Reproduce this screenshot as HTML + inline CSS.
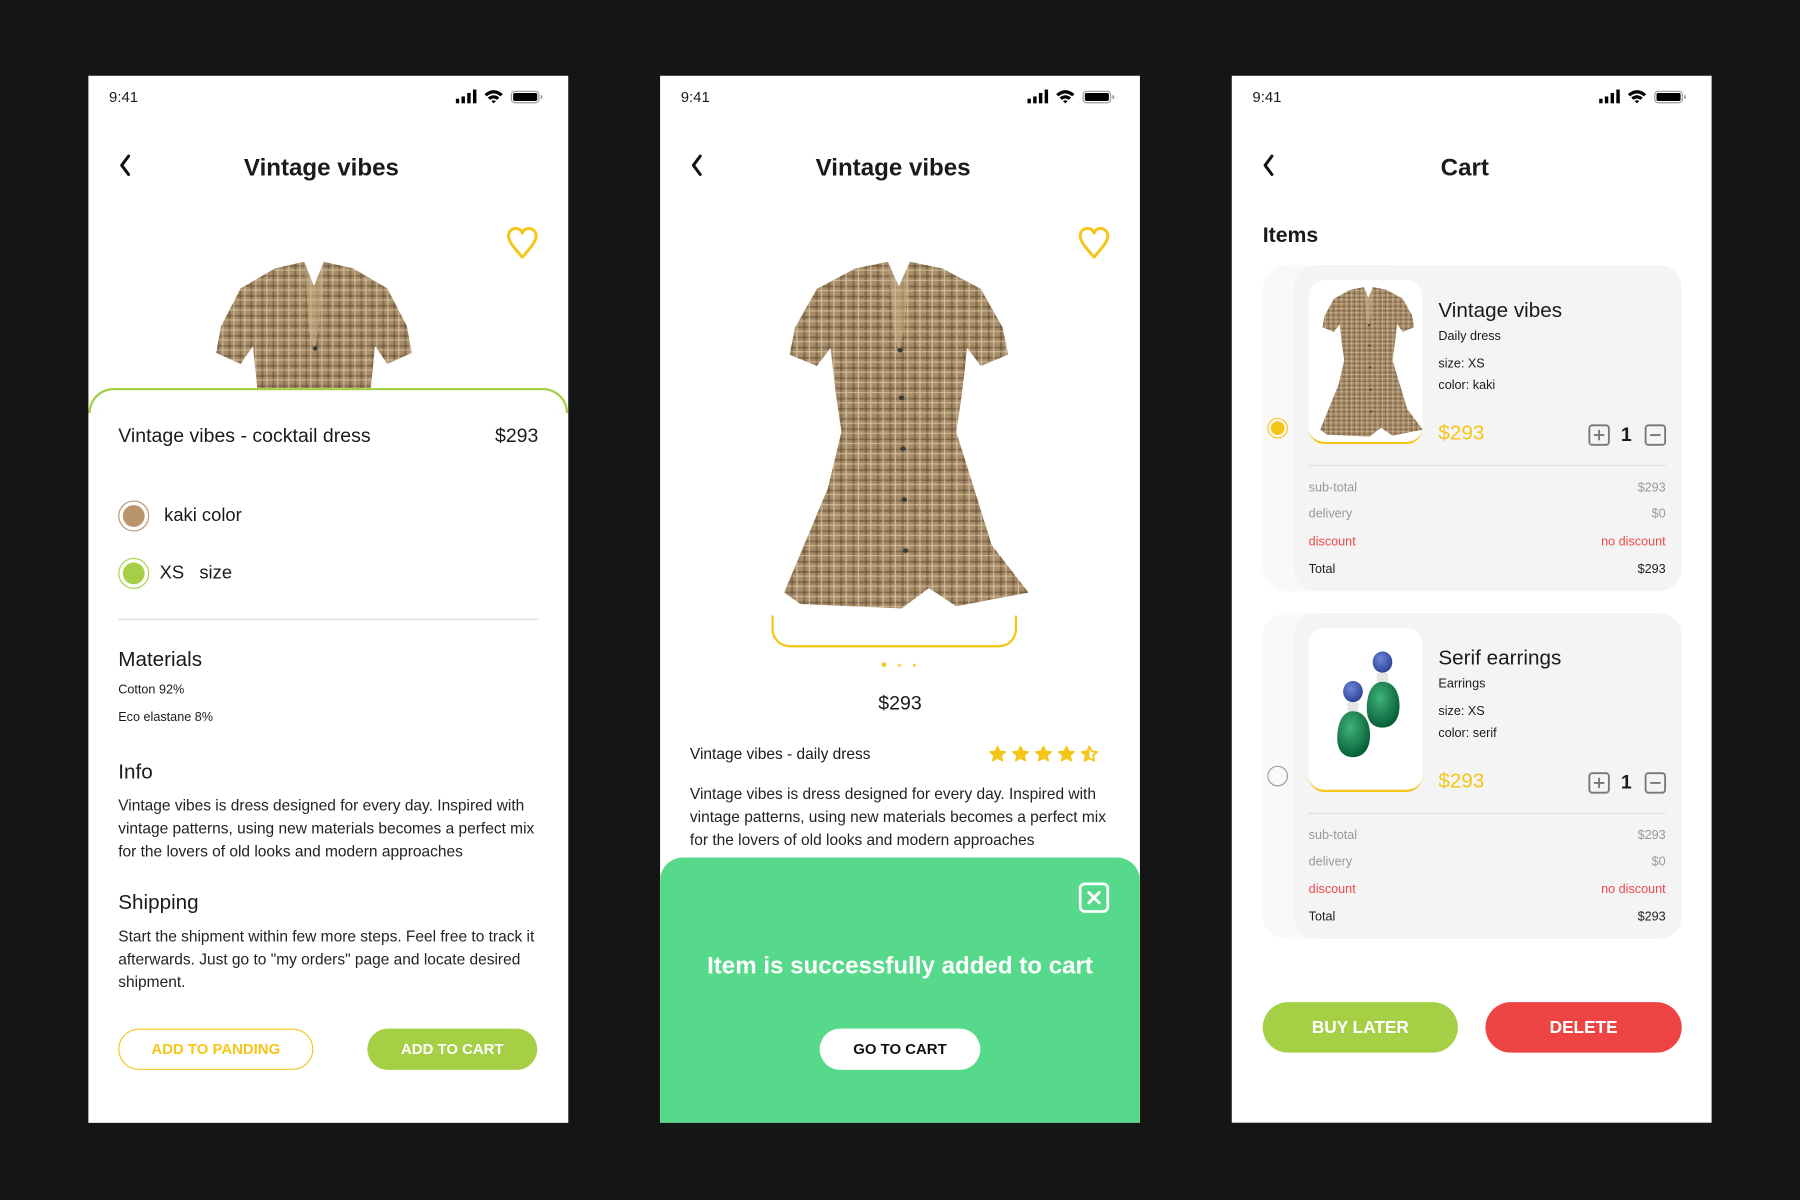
<!DOCTYPE html>
<html><head><meta charset="utf-8">
<style>
*{margin:0;padding:0;box-sizing:border-box}
html,body{width:1800px;height:1200px;overflow:hidden;background:#151515}
body{font-family:"Liberation Sans",Arial,sans-serif;color:#1a1a1a}
#w{position:absolute;left:0;top:0;width:1568px;height:1045px;transform:scale(1.14796);transform-origin:0 0;background:#151515}
.scr{position:absolute;top:66px;width:418px;height:912px;background:#fff;overflow:hidden}
.a{position:absolute;white-space:nowrap}
.time{left:18px;top:11px;font-size:13px}
.stat{right:22px;top:12px}
.title{left:0;width:406px;top:69px;text-align:center;font-weight:bold;font-size:21px}
.heart{top:131px}
.p14{font-size:13.5px;line-height:20px;color:#222}
.btn{position:absolute;border-radius:18px;text-align:center;font-weight:bold;font-size:13px}
.row{position:absolute;left:13px;right:14px;font-size:11px;display:flex;justify-content:space-between;color:#999}
</style></head><body>
<svg width="0" height="0" style="position:absolute">
<defs>
<pattern id="pl" width="9" height="9" patternUnits="userSpaceOnUse">
<rect width="9" height="9" fill="#a88c68"/>
<rect x="0" y="3" width="9" height="1.6" fill="#5e4a32" opacity=".55"/>
<rect x="3" y="0" width="1.6" height="9" fill="#5e4a32" opacity=".5"/>
<rect x="0" y="7" width="9" height="0.9" fill="#e0d0b0" opacity=".7"/>
<rect x="7" y="0" width="0.9" height="9" fill="#e0d0b0" opacity=".7"/>
</pattern>
<symbol id="dress" viewBox="0 0 200 310" preserveAspectRatio="none">
<path d="M68 6 L92 0 L100 22 L108 0 L132 6 L160 24 L176 58 L180 82 L160 92 L150 76 L146 118 L142 150 L168 250 L195 292 L142 304 L122 288 L102 306 L28 302 L16 292 L48 200 L58 150 L54 118 L50 76 L40 92 L20 82 L24 58 L40 24 Z" fill="url(#pl)"/>
<path d="M92 0 L100 22 L108 0 L104 60 L100 80 L96 60 Z" fill="#cdb58b" opacity=".5"/>
<g fill="#3a3a3a"><circle cx="101" cy="78" r="2"/><circle cx="102" cy="120" r="2"/><circle cx="103" cy="165" r="2"/><circle cx="104" cy="210" r="2"/><circle cx="105" cy="255" r="2"/></g>
</symbol>
<symbol id="sb" viewBox="0 0 76 13"><rect x="0" y="8" width="3" height="4" fill="#000"/><rect x="5" y="6" width="3" height="6" fill="#000"/><rect x="10" y="3" width="3" height="9" fill="#000"/><rect x="15" y="0" width="3" height="12" fill="#000"/><path d="M25 4 Q33 -3 41 4 L39 6 Q33 1 27 6Z M28 7 Q33 3 38 7 L36 9 Q33 6.5 30 9Z M31 10 L33 12 L35 10 Q33 8.6 31 10Z" fill="#000"/><rect x="48.5" y="1.5" width="24" height="10" rx="3" fill="none" stroke="#999" stroke-width="1"/><rect x="50" y="3" width="21" height="7" rx="1.5" fill="#000"/><rect x="74" y="5" width="1.5" height="3" fill="#999"/></symbol>
<symbol id="hrt" viewBox="0 0 28 30"><path d="M14 27 C6 18 2 13 2 8.5 C2 4.5 5 2 8.5 2 C11 2 13 3.5 14 6 C15 3.5 17 2 19.5 2 C23 2 26 4.5 26 8.5 C26 13 22 18 14 27Z" fill="none" stroke="#f5c518" stroke-width="2.6" stroke-linejoin="round"/></symbol>
<symbol id="chev" viewBox="0 0 12 20"><path d="M9 2 L3 10 L9 18" fill="none" stroke="#111" stroke-width="2.6" stroke-linecap="round" stroke-linejoin="round"/></symbol>
<symbol id="star" viewBox="0 0 20 20"><path d="M10 1.5 L12.6 6.8 L18.4 7.4 L14 11.4 L15.3 17.2 L10 14.2 L4.7 17.2 L6 11.4 L1.6 7.4 L7.4 6.8Z" fill="#f5c518" stroke="#f5c518" stroke-width="1.5" stroke-linejoin="round"/></symbol>
<symbol id="ear" viewBox="0 0 100 140">
<defs><radialGradient id="gr" cx=".4" cy=".35" r=".7"><stop offset="0" stop-color="#3fb37a"/><stop offset="1" stop-color="#045a33"/></radialGradient><radialGradient id="bl" cx=".4" cy=".35" r=".7"><stop offset="0" stop-color="#6e86d6"/><stop offset="1" stop-color="#2a3f94"/></radialGradient></defs>
<ellipse cx="70" cy="22" rx="12" ry="13" fill="url(#bl)"/><rect x="63" y="35" width="14" height="12" rx="3" fill="#e6e6e6"/><path d="M70 46 C88 46 93 68 90 84 C87 98 78 102 70 102 C60 102 52 96 51 82 C50 66 55 46 70 46Z" fill="url(#gr)"/>
<ellipse cx="34" cy="58" rx="12" ry="13" fill="url(#bl)"/><rect x="27" y="71" width="14" height="12" rx="3" fill="#e6e6e6"/><path d="M34 82 C52 82 57 104 54 120 C51 134 42 138 34 138 C24 138 16 132 15 118 C14 102 19 82 34 82Z" fill="url(#gr)"/>
</symbol>
<symbol id="plus" viewBox="0 0 20 20"><rect x="1.5" y="1.5" width="17" height="17" rx="2.5" fill="none" stroke="#777" stroke-width="1.6"/><path d="M10 5.5V14.5M5.5 10H14.5" stroke="#777" stroke-width="1.6"/></symbol>
<symbol id="minus" viewBox="0 0 20 20"><rect x="1.5" y="1.5" width="17" height="17" rx="2.5" fill="none" stroke="#777" stroke-width="1.6"/><path d="M5.5 10H14.5" stroke="#777" stroke-width="1.6"/></symbol>
</defs></svg>

<div id="w">
<!-- SCREEN 1 -->
<div class="scr" style="left:77px">
 <div class="a time">9:41</div>
 <svg class="a stat" width="76" height="13"><use href="#sb"/></svg>
 <svg class="a" width="12" height="20" style="left:26px;top:68px"><use href="#chev"/></svg>
 <div class="a title">Vintage vibes</div>
 <svg class="a heart" width="28" height="30" style="left:364px"><use href="#hrt"/></svg>
 <div class="a" style="left:90px;top:162px;width:215px;height:112px;overflow:hidden"><svg width="213" height="300"><use href="#dress"/></svg></div>
 <div class="a" style="left:0;right:0;top:272px;height:700px;background:#fff;border-radius:22px 22px 0 0"></div>
 <div class="a" style="left:0;right:0;top:272px;height:22px;border-top:2.5px solid #a5d046;border-left:2.5px solid #a5d046;border-right:2.5px solid #a5d046;border-radius:22px 22px 0 0"></div>
 <div class="a" style="left:26px;top:304px;font-size:17px">Vintage vibes - cocktail dress</div>
 <div class="a" style="right:26px;top:304px;font-size:17px">$293</div>
 <div class="a" style="left:26px;top:370px;width:27px;height:27px;border-radius:50%;border:1.5px solid #b8956a;padding:3px"><div style="width:100%;height:100%;border-radius:50%;background:#b8956a"></div></div>
 <div class="a" style="left:66px;top:375px;font-size:16px">kaki color</div>
 <div class="a" style="left:26px;top:420px;width:27px;height:27px;border-radius:50%;border:1.5px solid #a5d046;padding:3px"><div style="width:100%;height:100%;border-radius:50%;background:#a5d046"></div></div>
 <div class="a" style="left:62px;top:425px;font-size:16px">XS&nbsp;&nbsp;&nbsp;size</div>
 <div class="a" style="left:26px;right:26px;top:473px;height:1px;background:#ddd"></div>
 <div class="a" style="left:26px;top:498px;font-size:18px">Materials</div>
 <div class="a" style="left:26px;top:529px;font-size:11px">Cotton 92%</div>
 <div class="a" style="left:26px;top:553px;font-size:11px">Eco elastane 8%</div>
 <div class="a" style="left:26px;top:596px;font-size:18px">Info</div>
 <div class="a p14" style="left:26px;top:626px;white-space:normal;width:370px">Vintage vibes is dress designed for every day. Inspired with vintage patterns, using new materials becomes a perfect mix for the lovers of old looks and modern approaches</div>
 <div class="a" style="left:26px;top:710px;font-size:18px">Shipping</div>
 <div class="a p14" style="left:26px;top:740px;white-space:normal;width:370px">Start the shipment within few more steps. Feel free to track it afterwards. Just go to "my orders" page and locate desired shipment.</div>
 <div class="btn" style="left:26px;top:830px;width:170px;height:36px;line-height:33px;border:1.5px solid #f5c518;color:#f5c518">ADD TO PANDING</div>
 <div class="btn" style="left:243px;top:830px;width:148px;height:36px;line-height:36px;background:#a5d046;color:#fff">ADD TO CART</div>
</div>

<!-- SCREEN 2 -->
<div class="scr" style="left:575px">
 <div class="a time">9:41</div>
 <svg class="a stat" width="76" height="13"><use href="#sb"/></svg>
 <svg class="a" width="12" height="20" style="left:26px;top:68px"><use href="#chev"/></svg>
 <div class="a title">Vintage vibes</div>
 <svg class="a heart" width="28" height="30" style="left:364px"><use href="#hrt"/></svg>
 <svg class="a" style="left:89px;top:162px" width="238" height="306"><use href="#dress"/></svg>
 <div class="a" style="left:97px;top:470px;width:214px;height:28px;border:2.5px solid #f5c518;border-top:none;border-radius:0 0 16px 16px"></div>
 <div class="a" style="left:193px;top:511px;width:4px;height:4px;border-radius:50%;background:#f5c518"></div>
 <div class="a" style="left:207px;top:512px;width:3px;height:3px;border-radius:50%;background:#f5c518;opacity:.7"></div>
 <div class="a" style="left:220px;top:512px;width:3px;height:3px;border-radius:50%;background:#f5c518;opacity:.7"></div>
 <div class="a" style="left:0;right:0;top:537px;text-align:center;font-size:17px">$293</div>
 <div class="a" style="left:26px;top:583px;font-size:13.5px">Vintage vibes - daily dress</div>
 <div class="a" style="left:286px;top:583px">
  <svg width="16" height="16" style="margin-right:4px"><use href="#star"/></svg><svg width="16" height="16" style="margin-right:4px"><use href="#star"/></svg><svg width="16" height="16" style="margin-right:4px"><use href="#star"/></svg><svg width="16" height="16" style="margin-right:4px"><use href="#star"/></svg><svg width="16" height="16"><path d="M8 1.3 L10 5.5 L14.6 6 L11.2 9.1 L12.2 13.8 L8 11.4 L3.8 13.8 L4.8 9.1 L1.4 6 L6 5.5Z" fill="none" stroke="#f5c518" stroke-width="1.6" stroke-linejoin="round"/><path d="M8 1.3 L6 5.5 L1.4 6 L4.8 9.1 L3.8 13.8 L8 11.4Z" fill="#f5c518"/></svg>
 </div>
 <div class="a p14" style="left:26px;top:616px;white-space:normal;width:375px">Vintage vibes is dress designed for every day. Inspired with vintage patterns, using new materials becomes a perfect mix for the lovers of old looks and modern approaches</div>
 <div class="a" style="left:0;right:0;top:681px;height:240px;background:#57d98b;border-radius:20px 20px 0 0"></div>
 <svg class="a" style="left:364px;top:702px" width="28" height="28" viewBox="0 0 28 28"><rect x="2" y="2" width="24" height="24" rx="4" fill="none" stroke="#fff" stroke-width="2.4"/><path d="M9.5 9.5 L18.5 18.5 M18.5 9.5 L9.5 18.5" stroke="#fff" stroke-width="2.6" stroke-linecap="round"/></svg>
 <div class="a" style="left:0;right:0;top:764px;text-align:center;color:#fff;font-weight:bold;font-size:21px">Item is successfully added to cart</div>
 <div class="btn" style="left:139px;top:830px;width:140px;height:36px;line-height:36px;background:#fff;color:#111">GO TO CART</div>
</div>

<!-- SCREEN 3 -->
<div class="scr" style="left:1073px">
 <div class="a time">9:41</div>
 <svg class="a stat" width="76" height="13"><use href="#sb"/></svg>
 <svg class="a" width="12" height="20" style="left:26px;top:68px"><use href="#chev"/></svg>
 <div class="a title">Cart</div>
 <div class="a" style="left:27px;top:128px;font-weight:bold;font-size:18.5px">Items</div>

 <div class="a" style="left:27px;top:165px;width:365px;height:284px;background:#f9f9f9;border-radius:20px"></div>
 <div class="a" style="left:54px;top:165px;width:338px;height:284px;background:#f4f4f4;border-radius:20px">
  <div class="a" style="left:13px;top:13px;width:99px;height:143px;background:#fff;border-radius:14px;border-bottom:2px solid #f5c518;overflow:hidden"><svg style="position:absolute;left:2px;top:6px" width="100" height="132"><use href="#dress"/></svg></div>
  <div class="a" style="left:126px;top:29px;font-size:18px">Vintage vibes</div>
  <div class="a" style="left:126px;top:56px;font-size:11px">Daily dress</div>
  <div class="a" style="left:126px;top:80px;font-size:11px">size: XS</div>
  <div class="a" style="left:126px;top:99px;font-size:11px">color: kaki</div>
  <div class="a" style="left:126px;top:136px;font-size:18px;color:#f5c518">$293</div>
  <svg class="a" style="left:256px;top:138px" width="20" height="20"><use href="#plus"/></svg>
  <div class="a" style="left:285px;top:138px;font-size:17px;font-weight:bold">1</div>
  <svg class="a" style="left:305px;top:138px" width="20" height="20"><use href="#minus"/></svg>
  <div class="a" style="left:13px;right:14px;top:174px;height:1px;background:#ddd"></div>
  <div class="row" style="top:188px"><span>sub-total</span><span>$293</span></div>
  <div class="row" style="top:211px"><span>delivery</span><span>$0</span></div>
  <div class="row" style="top:235px;color:#f04848"><span>discount</span><span>no discount</span></div>
  <div class="row" style="top:259px;color:#222"><span>Total</span><span>$293</span></div>
 </div>
 <div class="a" style="left:31px;top:298px;width:18px;height:18px;border-radius:50%;border:1.3px solid #f5c518;padding:2px"><div style="width:100%;height:100%;border-radius:50%;background:#f5c518"></div></div>

 <div class="a" style="left:27px;top:468px;width:365px;height:284px;background:#f9f9f9;border-radius:20px"></div>
 <div class="a" style="left:54px;top:468px;width:338px;height:284px;background:#f4f4f4;border-radius:20px">
  <div class="a" style="left:13px;top:13px;width:99px;height:143px;background:#fff;border-radius:14px;border-bottom:2px solid #f5c518;overflow:hidden"><svg style="position:absolute;left:14px;top:14px" width="72" height="100" viewBox="0 0 100 140"><use href="#ear"/></svg></div>
  <div class="a" style="left:126px;top:29px;font-size:18px">Serif earrings</div>
  <div class="a" style="left:126px;top:56px;font-size:11px">Earrings</div>
  <div class="a" style="left:126px;top:80px;font-size:11px">size: XS</div>
  <div class="a" style="left:126px;top:99px;font-size:11px">color: serif</div>
  <div class="a" style="left:126px;top:136px;font-size:18px;color:#f5c518">$293</div>
  <svg class="a" style="left:256px;top:138px" width="20" height="20"><use href="#plus"/></svg>
  <div class="a" style="left:285px;top:138px;font-size:17px;font-weight:bold">1</div>
  <svg class="a" style="left:305px;top:138px" width="20" height="20"><use href="#minus"/></svg>
  <div class="a" style="left:13px;right:14px;top:174px;height:1px;background:#ddd"></div>
  <div class="row" style="top:188px"><span>sub-total</span><span>$293</span></div>
  <div class="row" style="top:211px"><span>delivery</span><span>$0</span></div>
  <div class="row" style="top:235px;color:#f04848"><span>discount</span><span>no discount</span></div>
  <div class="row" style="top:259px;color:#222"><span>Total</span><span>$293</span></div>
 </div>
 <div class="a" style="left:31px;top:601px;width:18px;height:18px;border-radius:50%;border:1.3px solid #999"></div>

 <div class="btn" style="left:27px;top:807px;width:170px;height:44px;line-height:46px;border-radius:22px;background:#a5d046;color:#fff;font-size:15px">BUY LATER</div>
 <div class="btn" style="left:221px;top:807px;width:171px;height:44px;line-height:46px;border-radius:22px;background:#ef4444;color:#fff;font-size:15px">DELETE</div>
</div>
</div>
</body></html>
